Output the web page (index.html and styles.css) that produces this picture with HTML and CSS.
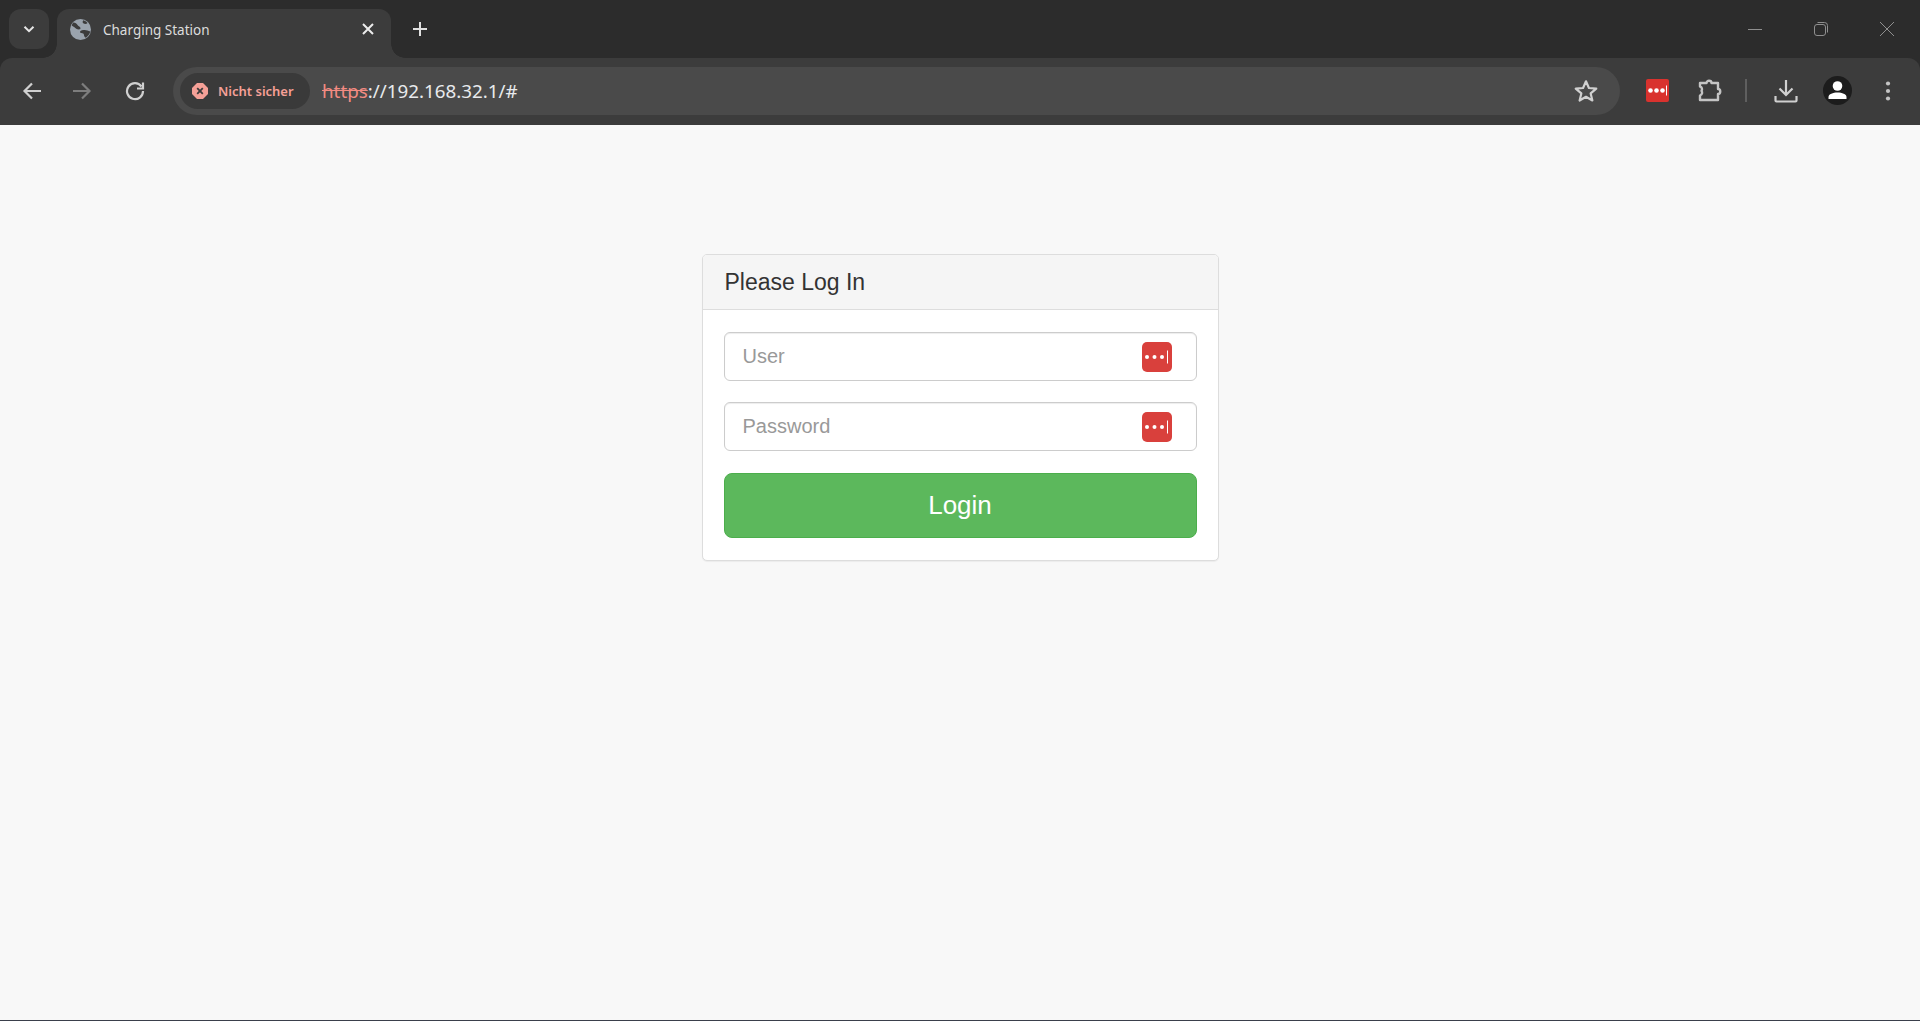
FILE: index.html
```html
<!DOCTYPE html>
<html lang="de">
<head>
    <meta charset="UTF-8">
    <meta name="viewport" content="width=device-width, initial-scale=1.0">
    <title>Charging Station</title>
    <link rel="stylesheet" href="styles.css">
</head>
<body>
    <div class="tabstrip">
        <div class="tabsearch">
            <svg width="14" height="14" viewBox="0 0 14 14"><path d="M2.500 4.800 7 9.200l4.500-4.400" fill="none" stroke="#e6e6e6" stroke-width="2"/></svg>
        </div>
        <div class="tab">
            <svg class="globe" width="21" height="21" viewBox="0 0 20 20">
                <circle cx="10" cy="10" r="10" fill="#9aa3ad"/>
                <path d="M3 3.400c2.200.3 3.400 1.100 4.200 2.400.7 1.200 1.900 1.300 2.600 2.300.6 1-.2 1.900-1.400 1.900-2 0-3.100-1-4.200-2.100L1.600 6.200A10 10 0 0 1 3 3.400zM12.600 1.200c1.600.5 3 1.400 4.100 2.600-.8.900-2.200 1-3.300.7-1-.3-1.600-1.200-1.300-2.100zM19.300 11.800c-.6 2.500-2.200 4.700-4.300 6-1-.6-1.700-1.400-1.700-2.600 0-1.300-1.200-1.600-2.600-1.800-1.200-.2-1.600-1.200-.7-2 1-.9 2.400-1.100 3.900-.9 1.900.2 3.500.6 5.400 1.300z" fill="#3c3c3c"/>
            </svg>
            <span class="tab-title">Charging Station</span>
            <svg class="tab-close" width="14" height="14" viewBox="0 0 14 14"><path d="M2 2l10 10M12 2 2 12" stroke="#ececec" stroke-width="2"/></svg>
        </div>
        <div class="newtab">
            <svg width="16" height="16" viewBox="0 0 16 16"><path d="M8 1v14M1 8h14" stroke="#e0e0e0" stroke-width="2"/></svg>
        </div>
        <div class="winctrls">
            <svg width="66" height="16" viewBox="0 0 16 16"><path d="M1 8.500h14" stroke="#8f8f8f"/></svg>
            <svg width="66" height="16" viewBox="0 0 16 16"><rect x="1.500" y="3.500" width="11" height="11" rx="2.500" fill="none" stroke="#8f8f8f"/><path d="M4.500 1.500h7a3 3 0 0 1 3 3v7" fill="none" stroke="#8f8f8f"/></svg>
            <svg width="66" height="16" viewBox="0 0 16 16"><path d="M1 1l14 14M15 1 1 15" stroke="#8f8f8f"/></svg>
        </div>
    </div>

    <div class="toolbar">
        <div class="navbtn">
            <svg width="20" height="20" viewBox="0 0 20 20"><path d="M19 10H3M10 2.500 2.500 10l7.500 7.500" fill="none" stroke="#d0d0d0" stroke-width="2.200"/></svg>
        </div>
        <div class="navbtn">
            <svg width="20" height="20" viewBox="0 0 20 20"><path d="M1 10h16M10 2.500 17.500 10 10 17.500" fill="none" stroke="#7d7d7d" stroke-width="2.200"/></svg>
        </div>
        <div class="navbtn reload">
            <svg width="20" height="20" viewBox="0 0 20 20"><path d="M16.500 5.500A8 8 0 1 0 18 10M18 1.500V7.500H12" fill="none" stroke="#d0d0d0" stroke-width="2.200"/></svg>
        </div>
        <div class="omnibox">
            <div class="chip">
                <svg width="16" height="16" viewBox="0 0 16 16">
                    <path d="M5 0h6l5 5v6l-5 5H5l-5-5V5z" fill="#f5a097"/>
                    <path d="M5.200 5.200l5.600 5.600M10.800 5.200l-5.600 5.600" stroke="#3a3a3a" stroke-width="1.800"/>
                </svg>
                <span class="chip-text">Nicht sicher</span>
            </div>
            <div class="url"><span class="scheme">https</span>://192.168.32.1/#</div>
            <svg class="star" width="26" height="26" viewBox="0 0 24 24"><path d="M12 3l2.700 6.200 6.800.6-5.200 4.400 1.600 6.600-5.900-3.500-5.900 3.500 1.600-6.600-5.200-4.400 6.800-.6z" fill="none" stroke="#d0d0d0" stroke-width="2" stroke-linejoin="round"/></svg>
        </div>
        <div class="navbtn lp-btn">
            <div class="lastpass lastpass-bar">
                <svg width="23" height="23" viewBox="0 0 23 23">
                    <circle cx="4.500" cy="11.500" r="2.300" fill="#fff"/>
                    <circle cx="10.500" cy="11.500" r="2.300" fill="#fff"/>
                    <circle cx="16.500" cy="11.500" r="2.300" fill="#fff"/>
                    <path d="M20.500 6.500v10" stroke="#fff"/>
                </svg>
            </div>
        </div>
        <div class="navbtn ext-btn">
            <svg width="26" height="26" viewBox="0 0 26 26"><path d="M3 5h6.500c0-3 5-3 5 0H21v6c3 0 3 5 0 5v6H3v-4.500c2.500-1 2.500-3.500 1.500-4.500C5.500 11.500 5 9 3 8.500z" fill="none" stroke="#c4c4c4" stroke-width="2.400" stroke-linejoin="round"/></svg>
        </div>
        <div class="divider"></div>
        <div class="navbtn dl-btn">
            <svg width="24" height="24" viewBox="0 0 24 24"><path d="M12 1v15M5.500 9.500 12 16l6.500-6.500M1.500 17v4.500a1 1 0 0 0 1 1h19a1 1 0 0 0 1-1V17" fill="none" stroke="#d0d0d0" stroke-width="2.200"/></svg>
        </div>
        <div class="navbtn">
            <div class="avatar">
                <svg width="29" height="29" viewBox="0 0 29 29">
                    <circle cx="14.500" cy="10" r="4.800" fill="#fff"/>
                    <path d="M5.500 23v-2c0-3 4.500-4.500 9-4.500s9 1.500 9 4.500v2z" fill="#fff"/>
                </svg>
            </div>
        </div>
        <div class="navbtn menu-btn">
            <svg width="6" height="20" viewBox="0 0 6 20"><circle cx="3" cy="2.500" r="2.100" fill="#c4c4c4"/><circle cx="3" cy="10" r="2.100" fill="#c4c4c4"/><circle cx="3" cy="17.500" r="2.100" fill="#c4c4c4"/></svg>
        </div>
    </div>

    <div class="page">
        <div class="panel">
            <div class="panel-heading">Please Log In</div>
            <form class="panel-body">
                <div class="field">
                    <input type="text" class="textbox" placeholder="User">
                    <div class="lastpass lastpass-field">
                        <svg width="30" height="30" viewBox="0 0 30 30">
                            <circle cx="5" cy="15" r="2" fill="#fff"/>
                            <circle cx="12.500" cy="15" r="2" fill="#fff"/>
                            <circle cx="20" cy="15" r="2" fill="#fff"/>
                            <path d="M25.500 8.500v13" stroke="#fff"/>
                        </svg>
                    </div>
                </div>
                <div class="field">
                    <input type="password" class="textbox" placeholder="Password">
                    <div class="lastpass lastpass-field">
                        <svg width="30" height="30" viewBox="0 0 30 30">
                            <circle cx="5" cy="15" r="2" fill="#fff"/>
                            <circle cx="12.500" cy="15" r="2" fill="#fff"/>
                            <circle cx="20" cy="15" r="2" fill="#fff"/>
                            <path d="M25.500 8.500v13" stroke="#fff"/>
                        </svg>
                    </div>
                </div>
                <button type="button" class="login">Login</button>
            </form>
        </div>
    </div>
</body>
</html>
```

FILE: styles.css
```css
* {
    padding: 0;
    margin: 0;
    box-sizing: border-box;
}

html, body {
    height: 100%;
}

body {
    display: flex;
    flex-direction: column;
    overflow: hidden;
    background-color: #2c2c2c;
    font-family: "Liberation Sans", Arial, sans-serif;
}

/* window top row */
.tabstrip {
    height: 58px;
    display: flex;
    align-items: flex-end;
    padding-left: 9px;
    background-color: #2c2c2c;
}
.tabsearch {
    width: 40px;
    height: 40px;
    margin-bottom: 9px;
    border-radius: 12px;
    background-color: #3c3c3c;
    display: flex;
    align-items: center;
    justify-content: center;
}
.tab {
    position: relative;
    width: 334px;
    height: 49px;
    margin-left: 8px;
    padding: 0 16px 9px 13px;
    border-radius: 12px 12px 0 0;
    background-color: #3c3c3c;
    display: flex;
    align-items: center;
}
.tab::before,
.tab::after {
    content: "";
    position: absolute;
    bottom: 0;
    width: 14px;
    height: 14px;
}
.tab::before {
    left: -14px;
    background: radial-gradient(circle at 0 0, transparent 13.5px, #3c3c3c 14px);
}
.tab::after {
    right: -14px;
    background: radial-gradient(circle at 100% 0, transparent 13.5px, #3c3c3c 14px);
}
.globe {
    flex: none;
}
.tab-title {
    flex: 1;
    margin-left: 12px;
    padding-top: 1px;
    font-family: "Noto Sans", sans-serif;
    font-size: 13.500px;
    color: #dcdcdc;
}
.newtab {
    width: 58px;
    height: 38px;
    margin-bottom: 10px;
    display: flex;
    align-items: center;
    justify-content: center;
}
.winctrls {
    margin-left: auto;
    height: 58px;
    padding: 21px 0 0 0;
    display: flex;
    align-items: flex-start;
}

/* address bar row */
.toolbar {
    height: 67px;
    padding: 0 7px 2px 7px;
    border-radius: 12px 12px 0 0;
    background-color: #3c3c3c;
    display: flex;
    align-items: center;
    position: relative;
}
.navbtn {
    flex: none;
    width: 50px;
    height: 48px;
    display: flex;
    align-items: center;
    justify-content: center;
}
.reload {
    margin-left: 3px;
}
.omnibox {
    flex: 1;
    height: 48px;
    margin-left: 13px;
    padding: 0 21px 0 7px;
    border-radius: 24px;
    background-color: #4a4a4a;
    display: flex;
    align-items: center;
}
.chip {
    width: 130px;
    height: 36px;
    padding-left: 12px;
    border-radius: 18px;
    background-color: #3a3a3a;
    display: flex;
    align-items: center;
}
.chip-text {
    margin-left: 10px;
    font-family: "Noto Sans", sans-serif;
    font-size: 13px;
    font-weight: 600;
    color: #f5a097;
}
.url {
    flex: 1;
    margin-left: 12px;
    font-family: "Noto Sans", sans-serif;
    font-size: 18.800px;
    color: #e8eaed;
}
.scheme {
    color: #f28b82;
    text-decoration: line-through;
}
.lastpass {
    background-color: #d9322e;
}
.lastpass-bar {
    width: 23px;
    height: 23px;
    border-radius: 2px;
    display: flex;
}
.lp-btn {
    width: 52px;
    margin-left: 11px;
}
.ext-btn {
    width: 52px;
    margin-left: 1px;
}
.divider {
    width: 2px;
    height: 23px;
    margin-left: 9px;
    background-color: #5f5f5f;
}
.dl-btn {
    width: 52px;
    margin-left: 13px;
}
.menu-btn {
    margin-left: 1px;
}
.avatar {
    width: 29px;
    height: 29px;
    border-radius: 50%;
    background-color: #1c1c1c;
    display: flex;
}

/* login page */
.page {
    flex: 1;
    padding-top: 129px;
    border-bottom: 1px solid #3a3f4b;
    background-color: #f8f8f8;
    display: flex;
    justify-content: center;
    align-items: flex-start;
}
.panel {
    width: 517px;
    border: 1px solid #ddd;
    border-radius: 5px;
    background-color: white;
    box-shadow: 0 1px 1px rgba(0, 0, 0, .05);
}
.panel-heading {
    height: 55px;
    padding: 0 22px;
    border-bottom: 1px solid #ddd;
    border-radius: 4px 4px 0 0;
    background-color: #f5f5f5;
    color: #333;
    font-size: 23px;
    line-height: 55px;
}
.panel-body {
    padding: 22px 21px 22px;
    display: flex;
    flex-direction: column;
    gap: 21px;
}
.field {
    position: relative;
    height: 49px;
}
.textbox {
    width: 100%;
    height: 100%;
    padding: 0 18px;
    border: 1px solid #ccc;
    border-radius: 6px;
    outline: none;
    box-shadow: inset 0 1px 1px rgba(0, 0, 0, .075);
    font-family: "Liberation Sans", Arial, sans-serif;
    font-size: 20px;
    color: #555;
}
.textbox::placeholder {
    color: #999;
    opacity: 1;
}
.lastpass-field {
    position: absolute;
    top: 10px;
    right: 25px;
    width: 30px;
    height: 30px;
    border-radius: 5px;
    background-color: #d9403c;
}
.login {
    height: 65px;
    margin-top: 1px;
    border: 1px solid #4cae4c;
    border-radius: 8px;
    background-color: #5cb85c;
    color: white;
    font-family: "Liberation Sans", Arial, sans-serif;
    font-size: 26px;
    cursor: pointer;
}
```
